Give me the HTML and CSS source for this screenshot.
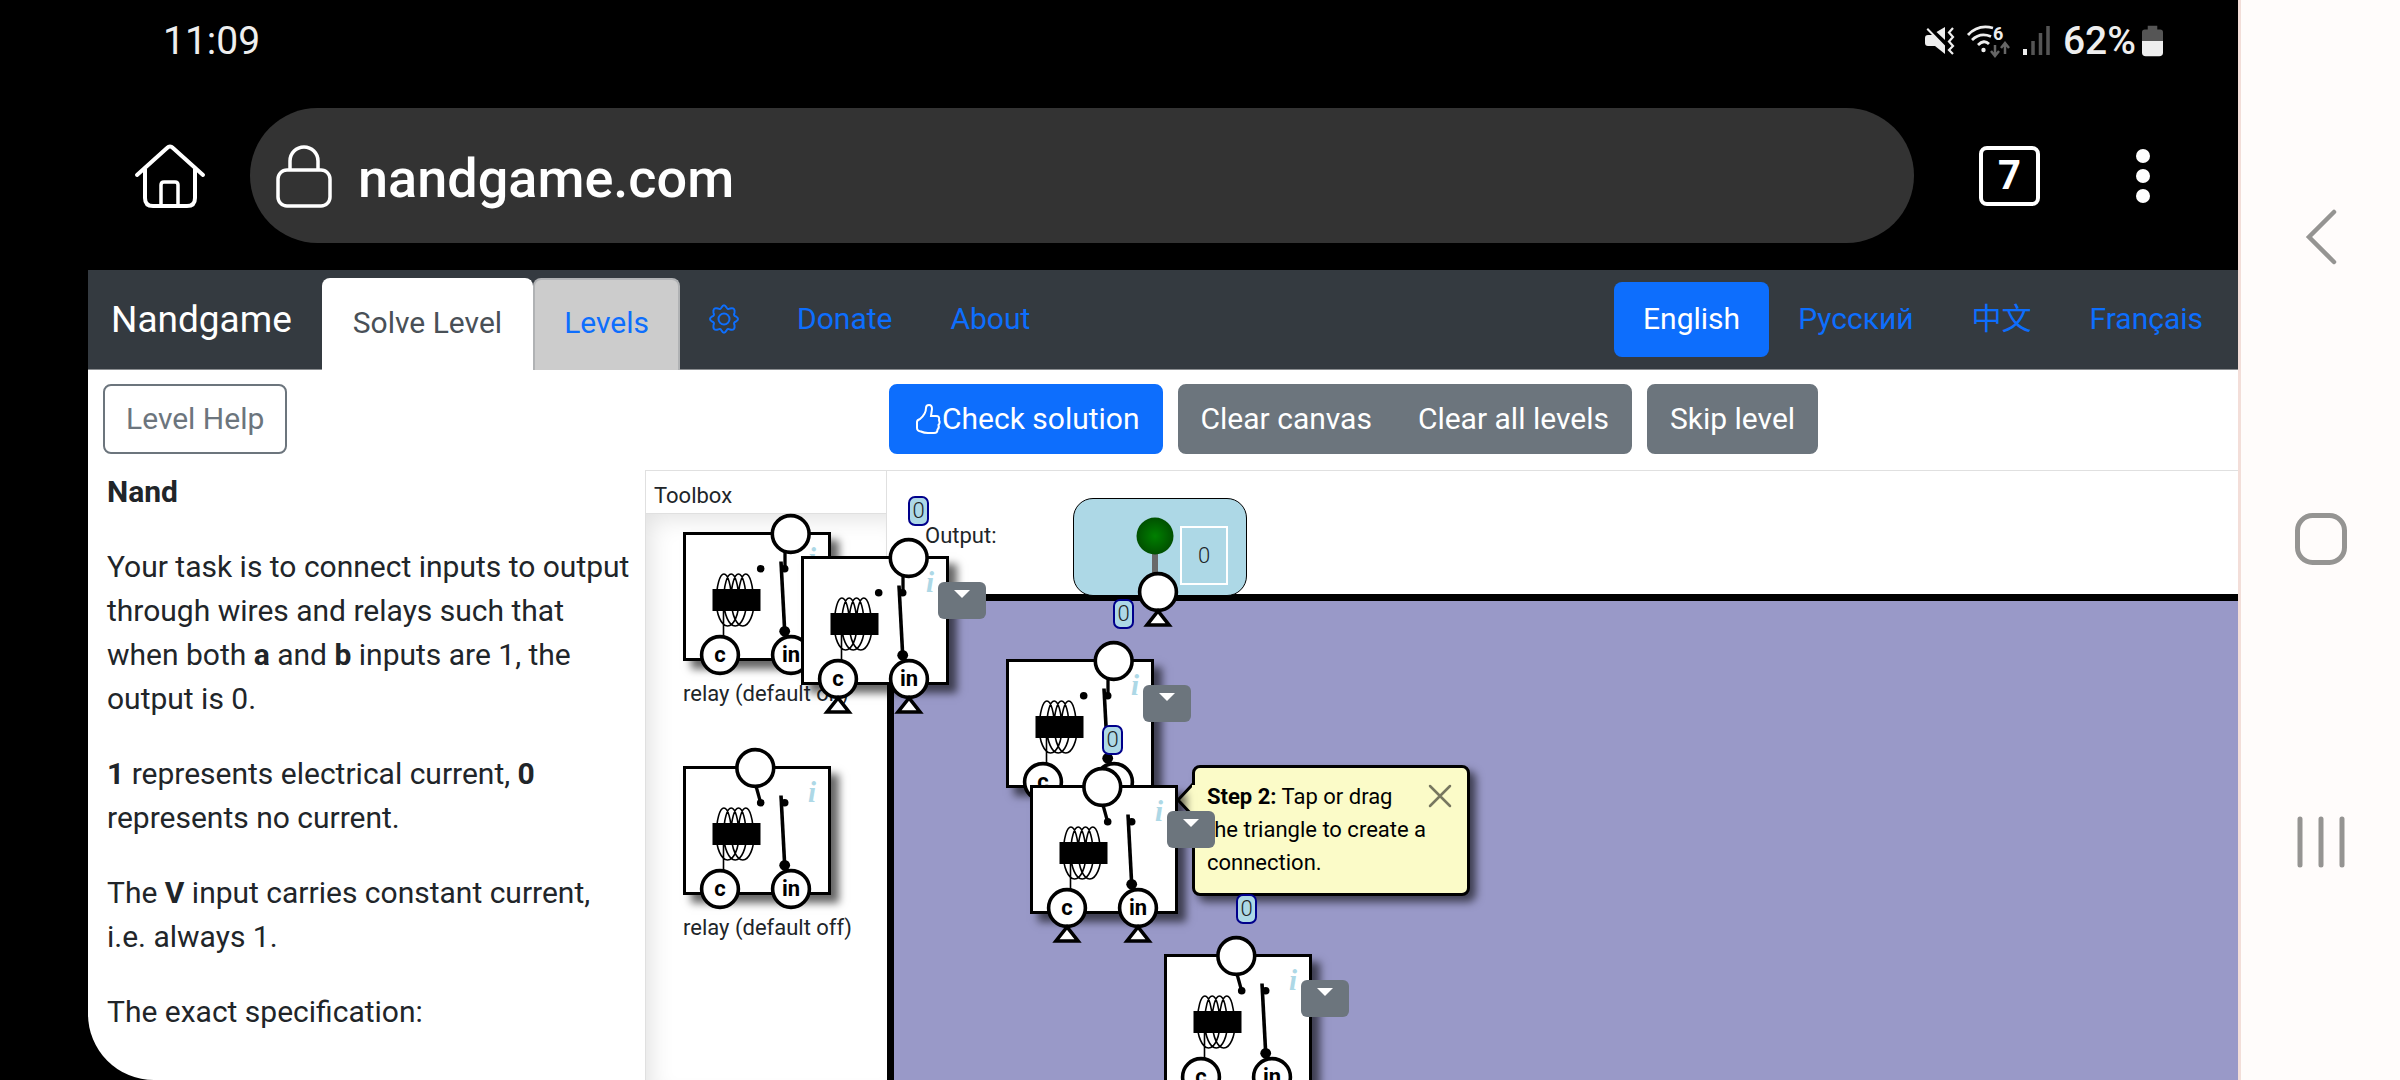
FILE: index.html
```html
<!DOCTYPE html>
<html lang="en">
<head>
<meta charset="utf-8">
<meta name="viewport" content="width=device-width, initial-scale=1">
<title>Nandgame</title>
<link rel="stylesheet" href="styles.css">
</head>
<body>
<svg class="defs" aria-hidden="true">
  <defs>
    <g id="coil">
      <g fill="none" stroke="#000" stroke-width="1.6">
        <path d="M33.500 68A7.400 26 0 0 1 48.300 68M40.800 68A7.400 26 0 0 1 55.600 68M48.100 68A7.400 26 0 0 1 62.900 68M55.400 68A7.400 26 0 0 1 70.200 68"/>
        <path d="M33.200 68A11.400 26 0 0 0 56 68M40.800 68A11.400 26 0 0 0 63.600 68M48.400 68A11.400 26 0 0 0 71.200 68M40.500 68V104"/>
      </g>
      <rect x="29.500" y="57" width="48" height="22"/>
      <circle cx="77.700" cy="36.700" r="3.800"/>
      <circle cx="101.700" cy="36.700" r="3.800"/>
      <path d="M98 29.500L101.700 99.300" stroke="#000" stroke-width="3.600"/>
      <circle cx="101.700" cy="99.300" r="5.400"/>
    </g>
    <g id="port">
      <circle r="18.400" fill="#fff" stroke="#000" stroke-width="3.600"/>
    </g>
    <path id="plug" d="M0 20L-11 34H11Z" fill="#fff" stroke="#000" stroke-width="3.600"/>
    <g id="arm-on">
      <path d="M102 18V37" stroke="#000" stroke-width="3.300"/>
      <use href="#port" x="107.700" y="2"/>
    </g>
    <g id="arm-off">
      <path d="M73 20L77.700 37" stroke="#000" stroke-width="3.300"/>
      <use href="#port" x="72.300" y="2"/>
    </g>
    <radialGradient id="lamp"><stop offset="0" stop-color="#008000"/><stop offset="1" stop-color="#005000"/></radialGradient>
  </defs>
</svg>

<div class="phone">
  <header class="status">
    <span>11:09</span>
    <div class="status-icons">
      <svg width="29" height="30" viewBox="0 0 29 30"><path d="M3 2L20 19.500V28L10 20H3Q0 20 0 17V12Q0 9 3 9H7L1.500 3.500ZM20 1V14L11.500 6Z" fill="#eee"/><path d="M28 2L24 6.500L28 11L24 15.500L28 20L24 24L28 28" fill="none" stroke="#eee" stroke-width="2.200"/></svg>
      <svg width="43" height="32" viewBox="0 0 43 32"><path d="M1 10Q11-1 26 3M5 15Q13 7 24 11.500M11 20Q17 14 22 19" fill="none" stroke="#eee" stroke-width="2.800"/><circle cx="16.500" cy="25" r="2.200" fill="#eee"/><text class="wifi-gen" x="26" y="15">6</text><path d="M28 20v11m-4-5l4 5 4-5M38 29V18m-4 5l4-5 4 5" fill="none" stroke="#666" stroke-width="2.500"/></svg>
      <svg width="27" height="30" viewBox="0 0 27 30"><path d="M2 23v6" stroke="#eee" stroke-width="4"/><path d="M10 15v14M17.500 7v22M25 0v29" stroke="#555" stroke-width="3.500"/></svg>
      <div class="battery">
        <span>62%</span>
        <svg width="21" height="32" viewBox="0 0 22 32"><path d="M6 0h10v4h3q3 0 3 3v9H0V7q0-3 3-3h3z" fill="#555"/><path d="M0 16h22v12q0 4-4 4H4q-4 0-4-4z" fill="#eee"/></svg>
      </div>
    </div>
  </header>

  <div class="address-row">
    <button class="bare" aria-label="Home page"><svg width="70" height="64" viewBox="0 0 70 64" fill="none" stroke="#fff" stroke-width="4" stroke-linecap="round"><path d="M2 31L32 4q3-3 6 0L68 31M10 25v29q0 8 8 8h34q8 0 8-8V25" /><path d="M26 61V41q0-3 3-3h11q3 0 3 3v20" stroke-width="3.500"/></svg></button>
    <div class="address">
      <button class="bare" aria-label="Site security"><svg width="56" height="64" viewBox="0 0 56 64" fill="none" stroke="#fff" stroke-width="3.500"><rect x="2" y="26" width="52" height="36" rx="9"/><path d="M14 26V17a14 14 0 0 1 28 0v9"/></svg></button>
      <input class="url" type="text" value="nandgame.com" aria-label="Address">
    </div>
    <button class="tab-count" aria-label="7 open tabs">7</button>
    <button class="bare" aria-label="Menu"><svg width="40" height="60" viewBox="0 0 40 60" fill="#fff"><circle cx="20" cy="10" r="7"/><circle cx="20" cy="30" r="7"/><circle cx="20" cy="50" r="7"/></svg></button>
  </div>

  <div class="page">
    <nav class="navbar">
      <a class="brand" href="#">Nandgame</a>
      <a class="tab active" href="#">Solve Level</a>
      <a class="tab" href="#">Levels</a>
      <a class="link" href="#" aria-label="Settings"><svg width="30" height="30" viewBox="0 0 30 30" fill="none" stroke="currentColor" stroke-width="2"><circle cx="15" cy="15" r="5.500"/><path d="M12.500 3.500Q15-1 17.500 3.500Q18.500 6 21 4.500Q26.500 3 25.500 9Q24 11.500 27 12.500Q31 15 27 17.500Q24 18.500 25.500 21Q26.500 27 21 25.500Q18.500 24 17.500 26.500Q15 31 12.500 26.500Q11.500 24 9 25.500Q3.500 27 4.500 21Q6 18.500 3 17.500Q-1 15 3 12.500Q6 11.500 4.500 9Q3.500 3 9 4.500Q11.500 6 12.500 3.500Z"/></svg></a>
      <a class="link" href="#">Donate</a>
      <a class="link" href="#">About</a>
      <div class="languages">
        <a class="link current" href="#">English</a>
        <a class="link" href="#" lang="ru">Русский</a>
        <a class="link" href="#" lang="zh">中文</a>
        <a class="link" href="#" lang="fr">Français</a>
      </div>
    </nav>

    <div class="toolbar">
      <div><button class="btn outline">Level Help</button></div>
      <div class="actions">
        <button class="btn primary"><svg width="30" height="30" viewBox="-4 0 30 30" fill="none" stroke="#fff" stroke-width="2"><path d="M15 12H20Q24 12 23 16Q24.500 19 22.500 21Q23.500 24 21.500 25.500Q21.500 29 18 29H12Q8 29 5 27.500Q1 27 1 24V18Q1 16 4 15Q10 10 10 4Q10 1 13 1Q16 1 16 5Z"/></svg>Check solution</button>
        <div class="group"><button class="btn">Clear canvas</button><button class="btn">Clear all levels</button></div>
        <button class="btn">Skip level</button>
      </div>
    </div>

    <main class="level">
      <section class="help">
        <p><b>Nand</b></p>
        <p>Your task is to connect inputs to output through wires and relays such that when both <b>a</b> and <b>b</b> inputs are 1, the output is 0.</p>
        <p><b>1</b> represents electrical current, <b>0</b> represents no current.</p>
        <p>The <b>V</b> input carries constant current, i.e. always 1.</p>
        <p>The exact specification:</p>
      </section>

      <section class="toolbox">
        <h2>Toolbox</h2>
        <div class="parts">
          <figure>
            <div class="relay"><svg width="148" height="129"><use href="#coil"/><use href="#arm-on"/><use href="#port" x="37" y="123"/><use href="#port" x="108" y="123"/><text class="info" x="125" y="36">i</text><text class="pin" x="37" y="130">c</text><text class="pin" x="108" y="130">in</text></svg></div>
            <figcaption>relay (default on)</figcaption>
          </figure>
          <figure>
            <div class="relay"><svg width="148" height="129"><use href="#coil"/><use href="#arm-off"/><use href="#port" x="37" y="123"/><use href="#port" x="108" y="123"/><text class="info" x="125" y="36">i</text><text class="pin" x="37" y="130">c</text><text class="pin" x="108" y="130">in</text></svg></div>
            <figcaption>relay (default off)</figcaption>
          </figure>
        </div>
      </section>

      <section class="workspace">
        <div class="output-strip">Output:</div>
        <div class="canvas"></div>

        <div class="node output">
          <svg width="172" height="96"><path d="M81 50V80" stroke="#696969" stroke-width="6"/><circle cx="81" cy="37" r="18.500" fill="url(#lamp)"/><use href="#port" x="84" y="93"/><use href="#plug" x="84" y="92"/></svg>
          <span class="value">0</span>
        </div>

        <div class="node relay on r1">
          <svg width="148" height="129"><use href="#coil"/><use href="#arm-on"/><use href="#port" x="37" y="123"/><use href="#port" x="108" y="123"/><use href="#plug" x="37" y="122"/><use href="#plug" x="108" y="122"/><text class="info" x="125" y="36">i</text><text class="pin" x="37" y="130">c</text><text class="pin" x="108" y="130">in</text></svg>
          <span class="badge">0</span><button class="drop" aria-label="Relay options"></button>
        </div>

        <div class="node relay on r2">
          <svg width="148" height="129"><use href="#coil"/><use href="#arm-on"/><use href="#port" x="37" y="123"/><use href="#port" x="108" y="123"/><text class="info" x="125" y="36">i</text><text class="pin" x="37" y="130">c</text></svg>
          <span class="badge">0</span><button class="drop" aria-label="Relay options"></button>
        </div>

        <div class="node tip">
          <svg class="tip-arrow" width="20" height="40" viewBox="0 0 20 40"><path d="M18 2L3 18L18 34" fill="#fbfbc8" stroke="#000" stroke-width="3"/><path d="M17 3h3v30h-3z" fill="#fbfbc8"/></svg>
          <p><b>Step 2:</b> Tap or drag<br>the triangle to create a<br>connection.</p>
          <button class="bare close" aria-label="Close"><svg width="24" height="24" viewBox="0 0 24 24" stroke="#77775f" stroke-width="2.500" stroke-linecap="round"><path d="M2 2L22 22M22 2L2 22"/></svg></button>
        </div>

        <div class="node relay off r3">
          <svg width="148" height="129"><use href="#coil"/><use href="#arm-off"/><use href="#port" x="37" y="123"/><use href="#port" x="108" y="123"/><use href="#plug" x="37" y="122"/><use href="#plug" x="108" y="122"/><text class="info" x="125" y="36">i</text><text class="pin" x="37" y="130">c</text><text class="pin" x="108" y="130">in</text></svg>
          <span class="badge">0</span><button class="drop" aria-label="Relay options"></button>
        </div>

        <div class="node relay off r4">
          <svg width="148" height="129"><use href="#coil"/><use href="#arm-off"/><use href="#port" x="37" y="123"/><use href="#port" x="108" y="123"/><text class="info" x="125" y="36">i</text><text class="pin" x="37" y="130">c</text><text class="pin" x="108" y="130">in</text></svg>
          <span class="badge">0</span><button class="drop" aria-label="Relay options"></button>
        </div>
      </section>
    </main>
  </div>
</div>

<nav class="system" aria-label="System navigation">
  <button class="bare" aria-label="Back"><svg width="60" height="80" viewBox="0 0 60 80" fill="none" stroke="#959492" stroke-width="4.500" stroke-linecap="round"><path d="M43 15L18 40L43 65"/></svg></button>
  <button class="bare" aria-label="Home"><svg width="60" height="80" viewBox="0 0 60 80" fill="none" stroke="#959492" stroke-width="5"><rect x="6.500" y="15.500" width="47" height="47" rx="15"/></svg></button>
  <button class="bare" aria-label="Recent apps"><svg width="60" height="80" viewBox="0 0 60 80" stroke="#959492" stroke-width="5" stroke-linecap="round"><path d="M9 17V63M30 17V63M51 17V63"/></svg></button>
</nav>
</body>
</html>
```
FILE: styles.css
```css
* { box-sizing: border-box; }

body {
  margin: 0;
  height: 100vh;
  display: flex;
  overflow: hidden;
  background: #000;
  font-family: Roboto, "Noto Sans CJK SC", sans-serif;
  font-size: 30px;
  color: #212529;
}

a { text-decoration: none; }
p { margin: 0; }
svg { display: block; overflow: visible; }
button, input { font: inherit; }
.defs { position: absolute; width: 0; height: 0; }

.bare {
  padding: 0;
  border: 0;
  background: none;
}

.phone {
  flex: 1;
  min-width: 0;
  display: flex;
  flex-direction: column;
}

/* Phone status bar */
.status {
  display: flex;
  justify-content: space-between;
  align-items: center;
  height: 81px;
  padding: 0 75px 0 163px;
  color: #eee;
  font-size: 39px;
}
.status-icons {
  display: flex;
  align-items: center;
  gap: 13px;
}
.battery {
  display: flex;
  align-items: center;
  gap: 6px;
  font-weight: 500;
}
.wifi-gen {
  fill: #eee;
  font-size: 18px;
  font-weight: 700;
}

/* Browser address bar */
.address-row {
  display: flex;
  align-items: center;
  height: 189px;
  padding: 0 75px 0 135px;
}
.address {
  flex: 1;
  display: flex;
  align-items: center;
  gap: 26px;
  height: 135px;
  margin: 0 65px 0 45px;
  padding: 0 26px;
  border-radius: 68px;
  background: #333;
}
.url {
  flex: 1;
  padding: 5px 0 0;
  border: 0;
  background: none;
  color: #fff;
  font-size: 54px;
  font-weight: 500;
}
.tab-count {
  width: 61px;
  height: 60px;
  margin-right: 83px;
  padding: 0;
  border: 4px solid #fff;
  border-radius: 8px;
  background: none;
  color: #fff;
  font-size: 40px;
  font-weight: 700;
  line-height: 50px;
}

/* Web page */
.page {
  flex: 1;
  min-height: 0;
  display: flex;
  flex-direction: column;
  margin-left: 88px;
  overflow: hidden;
  border-bottom-left-radius: 66px;
  background: #fff;
}

.navbar {
  display: flex;
  align-items: center;
  height: 100px;
  flex: none;
  padding: 0 6px 0 23px;
  border-bottom: 1px solid #8a8d90;
  background: #343a40;
}
.brand {
  margin-right: 30px;
  color: #fff;
  font-size: 37px;
}
.tab {
  align-self: flex-end;
  height: 92px;
  margin-bottom: -1px;
  padding: 0 29px;
  border: 2px solid #b0b2b4;
  border-bottom: 0;
  border-radius: 8px 8px 0 0;
  background: #ccc;
  color: #0d6efd;
  line-height: 86px;
}
.tab.active {
  border-color: #fff;
  background: #fff;
  color: #495057;
}
.link {
  padding: 14px 29px 16px;
  border-radius: 8px;
  color: #0d6efd;
  line-height: 45px;
}
.link.current {
  background: #0d6efd;
  color: #fff;
}
.languages {
  display: flex;
  margin-left: auto;
}

.toolbar {
  display: grid;
  grid-template-columns: 786px 1fr;
  align-items: center;
  height: 100px;
  flex: none;
  padding: 0 15px 2px;
}
.actions {
  display: flex;
  gap: 15px;
}
.group { display: flex; }
.btn {
  display: flex;
  align-items: center;
  height: 70px;
  padding: 0 21px 1px;
  border: 2px solid #6c757d;
  border-radius: 8px;
  background: #6c757d;
  color: #fff;
  white-space: nowrap;
}
.btn.outline {
  background: #fff;
  color: #6c757d;
}
.btn.primary {
  border-color: #0d6efd;
  background: #0d6efd;
}
.group .btn:first-child { border-radius: 8px 0 0 8px; }
.group .btn:last-child { border-radius: 0 8px 8px 0; }

.level {
  flex: 1;
  min-height: 0;
  display: grid;
  grid-template-columns: 557px 241px 1fr;
}
.help {
  display: flex;
  flex-direction: column;
  gap: 31px;
  padding: 0 12px 0 19px;
  line-height: 44px;
}

.toolbox {
  display: flex;
  flex-direction: column;
  border: 1px solid #e0e0e0;
  border-width: 1px 0 0 1px;
  font-size: 22px;
}
.toolbox h2 {
  margin: 0;
  padding: 8px 8px 1px;
  border-bottom: 1px solid #e0e0e0;
  font: inherit;
  line-height: 33px;
}
.parts {
  flex: 1;
  display: flex;
  flex-direction: column;
  gap: 56px;
  padding: 18px 0 0 37px;
  box-shadow: inset 12px 12px 24px -8px rgba(0, 0, 0, .12);
}
figure { margin: 0; }
figcaption {
  margin-top: 16px;
  line-height: 33px;
  white-space: nowrap;
}

/* Circuit canvas */
.workspace {
  position: relative;
  display: flex;
  flex-direction: column;
  border-top: 1px solid #e0e0e0;
  font-size: 22px;
}
.output-strip {
  height: 123px;
  flex: none;
  padding: 48px 38px;
  border-left: 1px solid #e0e0e0;
  line-height: 33px;
}
.canvas {
  flex: 1;
  margin-left: 1px;
  border: 7px solid #000;
  border-width: 7px 0 0 7px;
  background: #9999c8;
}

.node { position: absolute; }
.relay {
  width: 148px;
  height: 129px;
  border: 3px solid #000;
  background: #fff;
  box-shadow: 8px 8px 8px rgba(0, 0, 0, .6);
}
.relay svg { margin: -3px; }
.info {
  fill: #add8e6;
  font: italic 700 29px "Liberation Serif", serif;
}
.pin {
  fill: #000;
  font-size: 22px;
  font-weight: 700;
  text-anchor: middle;
}
.r1 { left: -85px; top: 85px; }
.r2 { left: 120px; top: 188px; }
.r3 { left: 144px; top: 314px; }
.r4 { left: 278px; top: 483px; }

.badge {
  position: absolute;
  top: -63px;
  width: 21px;
  height: 30px;
  border: 2px solid #00008b;
  border-radius: 7px;
  background: #add8e6;
  font-weight: 300;
  line-height: 26px;
  text-align: center;
}
.on .badge { left: 104px; }
.off .badge { left: 69px; }

.drop {
  position: absolute;
  left: 134px;
  top: 23px;
  display: flex;
  justify-content: center;
  width: 48px;
  height: 37px;
  padding: 8px 0 0;
  border: 0;
  border-radius: 6px;
  background: #6c757d;
}
.drop::before {
  content: "";
  border: 8px solid transparent;
  border-top-color: #fff;
  border-bottom: 0;
}

.output {
  left: 187px;
  top: 27px;
  width: 174px;
  height: 98px;
  border: 1px solid #000;
  border-radius: 20px;
  background: #add8e6;
}
.value {
  position: absolute;
  left: 106px;
  top: 27px;
  width: 48px;
  height: 59px;
  border: 2px solid #fff;
  font-weight: 300;
  line-height: 55px;
  text-align: center;
}

.tip {
  left: 306px;
  top: 294px;
  display: flex;
  width: 278px;
  padding: 12px 12px 14px;
  border: 3px solid #000;
  border-radius: 8px;
  background: #fbfbc8;
  box-shadow: 6px 6px 8px rgba(0, 0, 0, .6);
  color: #000;
  line-height: 33px;
  white-space: nowrap;
}
.tip-arrow {
  position: absolute;
  left: -20px;
  top: 14px;
}
.close {
  position: absolute;
  right: 15px;
  top: 16px;
}

/* Phone navigation buttons */
.system {
  display: flex;
  flex-direction: column;
  align-items: center;
  justify-content: space-between;
  width: 162px;
  padding: 197px 0 198px;
  border-left: 3px solid #f3ded9;
  background: #fffcfb;
}
```
